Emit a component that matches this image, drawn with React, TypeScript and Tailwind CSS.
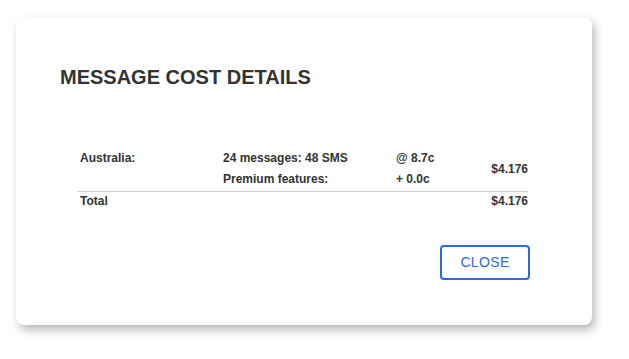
export default function App() {
  return (
    <div className="min-h-screen w-full bg-white" style={{ fontFamily: '"Liberation Sans", Arial, sans-serif' }}>
      <div className="pl-4 pt-[17px]">
        <div className="w-[576px] h-[308px] rounded-lg bg-white shadow-[3px_5px_10px_rgba(0,0,0,0.28)] pt-[48px] pl-11 pr-[62px] flex flex-col">
          <h1 className="text-[20px] leading-6 font-bold text-[#333]">MESSAGE COST DETAILS</h1>

          <div className="ml-[18px] w-[450px] mt-[59px] text-[12px] font-bold text-[#333]">
            <div className="grid grid-cols-[145px_173px_1fr_auto] pb-[1px] border-b border-[#cfcfcf]">
              <div className="pl-[2px] leading-[21px]">Australia:</div>
              <div className="leading-[21px]">24 messages: 48 SMS</div>
              <div className="leading-[21px]">@ 8.7c</div>
              <div className="row-span-2 self-center leading-[21px]">$4.176</div>
              <div />
              <div className="leading-[21px]">Premium features:</div>
              <div className="leading-[21px]">+ 0.0c</div>
            </div>
            <div className="flex justify-between leading-[19px]">
              <div className="pl-[2px]">Total</div>
              <div>$4.176</div>
            </div>
          </div>

          <div className="flex justify-end mt-[34px]">
            <button className="w-[90px] h-[35px] rounded-[4px] border-2 border-[#2f66e8] text-[#2f66e8] text-[14px] tracking-wide">
              CLOSE
            </button>
          </div>
        </div>
      </div>
    </div>
  )
}
